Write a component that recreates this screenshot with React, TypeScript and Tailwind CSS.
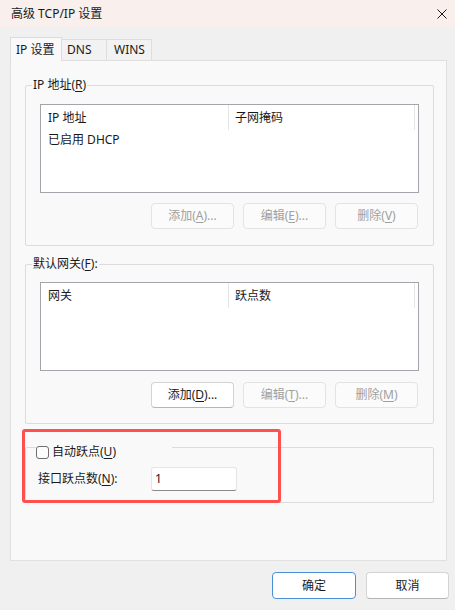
export default function App() {
  const font = "font-['Noto_Sans','Noto_Sans_CJK_SC',sans-serif]";
  const disBtn =
    "w-[83px] h-[26px] rounded-[4px] border border-[#e3e3e3] bg-[#fbfbfb] text-[#a0a0a0] flex items-center justify-center";
  const enBtn =
    "w-[83px] h-[26px] rounded-[4px] border border-[#d3d3d3] border-b-[#b5b5b5] bg-white text-[#1a1a1a] flex items-center justify-center";
  return (
    <div
      className={`relative w-[455px] h-[610px] overflow-hidden bg-[#f0f0f0] text-[12px] leading-[16px] text-[#1a1a1a] ${font}`}
    >
      {/* Title bar */}
      <div className="h-[27px] bg-[#f9efed] flex items-center justify-between pl-[11px] pr-[8px]">
        <span>高级 TCP/IP 设置</span>
        <svg width="10" height="10" viewBox="0 0 10 10">
          <path d="M0.5 0.5 L9.5 9.5 M9.5 0.5 L0.5 9.5" stroke="#1a1a1a" strokeWidth="1" fill="none" />
        </svg>
      </div>

      <div className="pl-[10px] pt-[10px]">
        {/* Tabs */}
        <div className="flex items-end h-[23px]">
          <div className="relative z-10 h-[24px] -mb-px w-[52px] pl-[5px] bg-[#f9f9f9] border border-b-0 border-[#dcdcdc] flex items-center">
            IP 设置
          </div>
          <div className="h-[21px] w-[45px] pl-[5px] border-t border-r border-[#dedede] bg-[#f2f2f2] flex items-center">
            DNS
          </div>
          <div className="h-[21px] w-[45px] pl-[7px] border-t border-r border-[#dedede] bg-[#f2f2f2] flex items-center">
            WINS
          </div>
        </div>

        {/* Panel */}
        <div className="w-[437px] h-[501px] border border-[#e0e0e0] bg-[#f9f9f9] pl-[14px] pr-[12px] pt-[16px]">
          {/* IP address group */}
          <fieldset className="border border-[#dcdcdc] rounded-[2px] pb-[16px]">
            <legend className="ml-[6px] px-[1px] leading-[16px]">
              IP 地址(<u className="underline-offset-[2px]">R</u>)
            </legend>
            <div className="mx-[14px] mt-[11px] h-[89px] bg-white border border-[#a2a6ab]">
              <div className="flex h-[25px]">
                <div className="w-[188px] pl-[7px] flex items-center border-r border-[#e5e5e5]">IP 地址</div>
                <div className="w-[186px] pl-[6px] flex items-center border-r border-[#e5e5e5]">子网掩码</div>
              </div>
              <div className="h-[20px] pl-[7px] flex items-center">已启用 DHCP</div>
            </div>
            <div className="flex justify-end gap-[9px] mr-[15px] mt-[10px]">
              <div className={disBtn}>
                添加(<u className="underline-offset-[2px]">A</u>)...
              </div>
              <div className={disBtn}>
                编辑(<u className="underline-offset-[2px]">E</u>)...
              </div>
              <div className={disBtn}>
                删除(<u className="underline-offset-[2px]">V</u>)
              </div>
            </div>
          </fieldset>

          {/* Default gateway group */}
          <fieldset className="mt-[10px] border border-[#dcdcdc] rounded-[2px] pb-[15px]">
            <legend className="ml-[6px] px-[1px] leading-[16px]">
              默认网关(<u className="underline-offset-[2px]">F</u>):
            </legend>
            <div className="mx-[14px] mt-[10px] h-[89px] bg-white border border-[#a2a6ab]">
              <div className="flex h-[25px]">
                <div className="w-[188px] pl-[7px] flex items-center border-r border-[#e5e5e5]">网关</div>
                <div className="w-[186px] pl-[6px] flex items-center border-r border-[#e5e5e5]">跃点数</div>
              </div>
            </div>
            <div className="flex justify-end gap-[9px] mr-[15px] mt-[11px]">
              <div className={enBtn}>
                添加(<u className="underline-offset-[2px]">D</u>)...
              </div>
              <div className={disBtn}>
                编辑(<u className="underline-offset-[2px]">T</u>)...
              </div>
              <div className={disBtn}>
                删除(<u className="underline-offset-[2px]">M</u>)
              </div>
            </div>
          </fieldset>

          {/* Automatic metric group */}
          <fieldset className="mt-[18px] border border-[#dcdcdc] rounded-[2px] pb-[11px]">
            <legend className="ml-[10px] w-[136px] h-[10px]">
              <div className="mt-[2px] h-[16px] flex items-center">
                <span className="w-[13px] h-[13px] border border-[#6e6e6e] rounded-[3px] bg-[#fcfcfc]" />
                <span className="ml-[3px]">
                  自动跃点(<u className="underline-offset-[2px]">U</u>)
                </span>
              </div>
            </legend>
            <div className="mt-[15px] h-[24px] pl-[12px] flex items-center">
              <div className="w-[113px]">
                接口跃点数(<u className="underline-offset-[2px]">N</u>):
              </div>
              <div className="w-[86px] h-[24px] bg-white border border-[#e5e5e5] border-b-[#8a8a8a] rounded-[3px] pl-[3px] flex items-center">
                1
              </div>
            </div>
          </fieldset>
        </div>
      </div>

      {/* Footer buttons */}
      <div className="mt-[11px] flex justify-end gap-[10px] pr-[6px]">
        <div className="w-[84px] h-[27px] rounded-[4px] border border-[#4a8fd8] bg-white flex items-center justify-center">
          确定
        </div>
        <div className="w-[83px] h-[27px] rounded-[4px] border border-[#d3d3d3] border-b-[#b5b5b5] bg-white flex items-center justify-center">
          取消
        </div>
      </div>

      {/* Red annotation box */}
      <div className="absolute left-[22px] top-[429px] w-[259px] h-[74px] border-[3px] border-[#ff5050] rounded-[3px]" />
    </div>
  );
}
